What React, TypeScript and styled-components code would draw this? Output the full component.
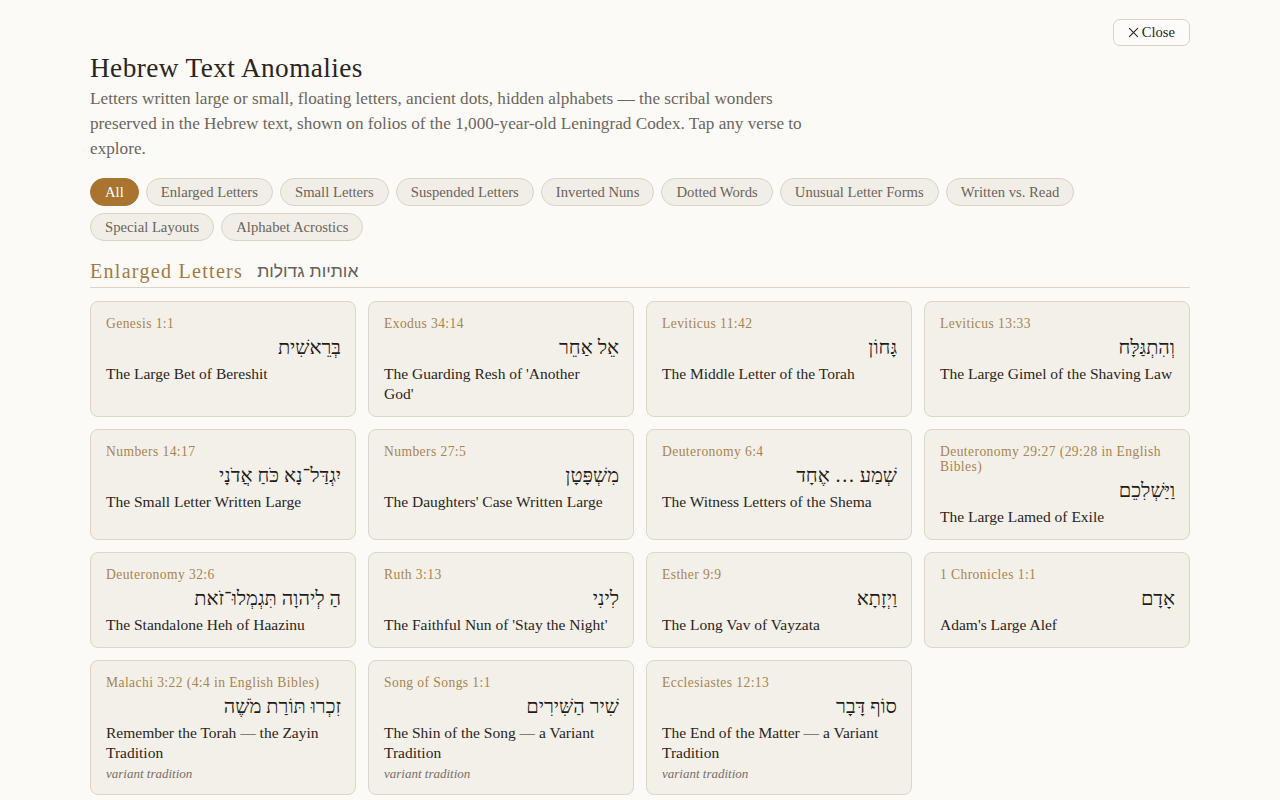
import React from "react";
import styled, { createGlobalStyle } from "styled-components";

const GlobalStyle = createGlobalStyle`
  body {
    margin: 0;
    background: #fbfaf7;
    font-family: "Liberation Serif", Georgia, serif;
    color: #2a2520;
  }
`;

type Anomaly = {
  ref: string;
  hebrew: string;
  title: string;
  note?: string;
};

const CATEGORIES = [
  "All",
  "Enlarged Letters",
  "Small Letters",
  "Suspended Letters",
  "Inverted Nuns",
  "Dotted Words",
  "Unusual Letter Forms",
  "Written vs. Read",
  "Special Layouts",
  "Alphabet Acrostics",
];

// titles keep the line breaks of the original layout (pre-line)
const ANOMALIES: Anomaly[] = [
  { ref: "Genesis 1:1", hebrew: "בְּרֵאשִׁית", title: "The Large Bet of Bereshit" },
  { ref: "Exodus 34:14", hebrew: "אֵל אַחֵר", title: "The Guarding Resh of 'Another\nGod'" },
  { ref: "Leviticus 11:42", hebrew: "גָּחוֹן", title: "The Middle Letter of the Torah" },
  { ref: "Leviticus 13:33", hebrew: "וְהִתְגַּלָּח", title: "The Large Gimel of the Shaving Law" },
  { ref: "Numbers 14:17", hebrew: "יִגְדַּל־נָא כֹּחַ אֲדֹנָי", title: "The Small Letter Written Large" },
  { ref: "Numbers 27:5", hebrew: "מִשְׁפָּטָן", title: "The Daughters' Case Written Large" },
  { ref: "Deuteronomy 6:4", hebrew: "שְׁמַע … אֶחָד", title: "The Witness Letters of the Shema" },
  {
    ref: "Deuteronomy 29:27 (29:28 in English Bibles)",
    hebrew: "וַיַּשְׁלִכֵם",
    title: "The Large Lamed of Exile",
  },
  { ref: "Deuteronomy 32:6", hebrew: "הַ לְיהוָה תִּגְמְלוּ־זֹאת", title: "The Standalone Heh of Haazinu" },
  { ref: "Ruth 3:13", hebrew: "לִינִי", title: "The Faithful Nun of 'Stay the Night'" },
  { ref: "Esther 9:9", hebrew: "וַיְזָתָא", title: "The Long Vav of Vayzata" },
  { ref: "1 Chronicles 1:1", hebrew: "אָדָם", title: "Adam's Large Alef" },
  {
    ref: "Malachi 3:22 (4:4 in English Bibles)",
    hebrew: "זִכְרוּ תּוֹרַת מֹשֶׁה",
    title: "Remember the Torah — the Zayin Tradition",
    note: "variant tradition",
  },
  {
    ref: "Song of Songs 1:1",
    hebrew: "שִׁיר הַשִּׁירִים",
    title: "The Shin of the Song — a Variant Tradition",
    note: "variant tradition",
  },
  {
    ref: "Ecclesiastes 12:13",
    hebrew: "סוֹף דָּבָר",
    title: "The End of the Matter — a Variant Tradition",
    note: "variant tradition",
  },
];

export default function App() {
  return (
    <>
      <GlobalStyle />
      <Page>
        <TopRow>
          <CloseButton type="button">
            <svg width="11" height="11" viewBox="0 0 12 12" fill="none">
              <path d="M1.5 1.5l9 9M10.5 1.5l-9 9" stroke="#2a2520" strokeWidth="1.2" strokeLinecap="round" />
            </svg>
            Close
          </CloseButton>
        </TopRow>
        <Title>Hebrew Text Anomalies</Title>
        <Intro>
          Letters written large or small, floating letters, ancient dots, hidden alphabets — the scribal
          wonders preserved in the Hebrew text, shown on folios of the 1,000-year-old Leningrad Codex. Tap
          any verse to explore.
        </Intro>

        <Chips>
          {CATEGORIES.map((c, i) => (
            <Chip key={c} $active={i === 0}>
              {c}
            </Chip>
          ))}
        </Chips>

        <SectionHeader>
          <SectionTitle>Enlarged Letters</SectionTitle>
          <SectionHebrew dir="rtl">אותיות גדולות</SectionHebrew>
        </SectionHeader>

        <Grid>
          {ANOMALIES.map((a) => (
            <Card key={a.ref}>
              <Ref>{a.ref}</Ref>
              <Hebrew dir="rtl" lang="he">
                {a.hebrew}
              </Hebrew>
              <CardTitle>{a.title}</CardTitle>
              {a.note && <Note>{a.note}</Note>}
            </Card>
          ))}
        </Grid>
      </Page>
    </>
  );
}

const Page = styled.div`
  max-width: 1100px;
  margin: 0 auto;
  padding: 19px 0 40px;
`;

const TopRow = styled.div`
  display: flex;
  justify-content: flex-end;
`;

const CloseButton = styled.button`
  display: flex;
  align-items: center;
  gap: 3px;
  height: 27px;
  padding: 0 14px 0 14px;
  border: 1px solid #d9d1c5;
  border-radius: 7px;
  background: #fdfcfa;
  color: #2a2520;
  font-family: "Liberation Serif", Georgia, serif;
  font-size: 14.6px;
  cursor: pointer;
`;

const Title = styled.h1`
  margin: 8px 0 0;
  font-size: 27.3px;
  font-weight: 400;
  line-height: 29px;
  letter-spacing: 0.4px;
  color: #2a2520;
`;

const Intro = styled.p`
  margin: 3px 0 0;
  max-width: 735px;
  font-size: 17.2px;
  line-height: 25px;
  color: #6d665e;
`;

const Chips = styled.div`
  display: flex;
  flex-wrap: wrap;
  gap: 7px 7px;
  margin-top: 17px;
  max-width: 1000px;
`;

const Chip = styled.button<{ $active?: boolean }>`
  height: 28px;
  padding: 0 14px;
  border-radius: 14px;
  border: 1px solid ${(p) => (p.$active ? "#a8742f" : "#dad3c8")};
  background: ${(p) => (p.$active ? "#a8742f" : "#f1eee8")};
  color: ${(p) => (p.$active ? "#ffffff" : "#6b635a")};
  font-family: "Liberation Serif", Georgia, serif;
  font-size: 14.7px;
  cursor: pointer;
`;

const SectionHeader = styled.div`
  display: flex;
  align-items: center;
  gap: 14px;
  height: 26px;
  margin-top: 17px;
  padding-bottom: 3px;
  border-bottom: 1px solid #ddd4c6;
`;

const SectionTitle = styled.h2`
  margin: 0;
  font-size: 20px;
  font-weight: 400;
  line-height: 26px;
  letter-spacing: 1.3px;
  color: #a27b45;
`;

const SectionHebrew = styled.span`
  font-family: "Liberation Sans", "DejaVu Sans", sans-serif;
  font-size: 17.5px;
  line-height: 26px;
  color: #66605a;
`;

const Grid = styled.div`
  display: grid;
  grid-template-columns: repeat(4, 1fr);
  gap: 12px;
  margin-top: 13px;
`;

const Card = styled.div`
  display: flex;
  flex-direction: column;
  padding: 14px 14px 12px 15px;
  background: #f3f0ea;
  border: 1px solid #dcd5c9;
  border-radius: 8px;
  cursor: pointer;
`;

const Ref = styled.div`
  font-size: 13.6px;
  line-height: 15px;
  letter-spacing: 0.4px;
  color: #a8844f;
`;

const Hebrew = styled.div`
  height: 26px;
  margin: 3px 0 4px;
  text-align: right;
  font-family: "Liberation Serif", "DejaVu Sans", serif;
  font-size: 20px;
  line-height: 26px;
  color: #1f1b17;
`;

const CardTitle = styled.div`
  font-size: 15.5px;
  line-height: 20px;
  white-space: pre-line;
  color: #2a2520;
`;

const Note = styled.div`
  margin-top: 3px;
  font-size: 13px;
  font-style: italic;
  line-height: 16px;
  color: #776e65;
`;
